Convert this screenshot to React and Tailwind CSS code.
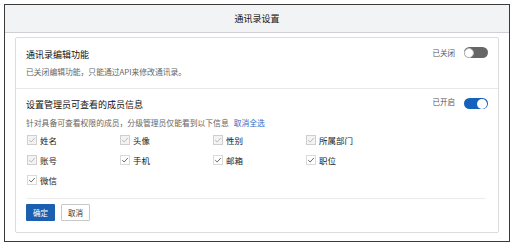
import React from 'react';

const font = { fontFamily: '"Noto Sans CJK SC", "Liberation Sans", sans-serif' };

const fields = [
  { label: '姓名', locked: true },
  { label: '头像', locked: true },
  { label: '性别', locked: true },
  { label: '所属部门', locked: true },
  { label: '账号', locked: true },
  { label: '手机', locked: false },
  { label: '邮箱', locked: false },
  { label: '职位', locked: false },
  { label: '微信', locked: false },
];

function Check({ locked }) {
  return (
    <span
      className={
        'flex h-[10px] w-[10px] items-center justify-center border ' +
        (locked ? 'border-[#cfcfcf] bg-[#f3f3f3]' : 'border-[#dadada] bg-white')
      }
    >
      <svg viewBox="0 0 10 10" className="h-[8px] w-[8px]">
        <path
          d="M1.5 5.2 L4 7.5 L8.6 2.4"
          fill="none"
          stroke={locked ? '#b3b3b3' : '#555'}
          strokeWidth="1.1"
        />
      </svg>
    </span>
  );
}

function Toggle({ on }) {
  return (
    <span
      className={
        'flex h-[11px] w-[24px] items-center rounded-full px-[1px] ' +
        (on ? 'justify-end bg-[#1562bd]' : 'justify-start bg-[#666]')
      }
    >
      <span
        className={
          'h-[10px] w-[10px] rounded-full bg-white ' +
          (on ? '' : 'border border-[#bbb] -ml-[1px]')
        }
      />
    </span>
  );
}

export default function App() {
  return (
    <div className="h-[245px] w-[515px] bg-white pl-[4px] pt-[4px]" style={font}>
      <div className="flex h-[238px] w-[506px] flex-col border border-[#3a3a3a]">
        {/* Header */}
        <div className="flex h-[28px] items-center justify-center border-b border-[#cdd1d5] bg-[#f1f3f5] text-[9px] text-[#111]">
          通讯录设置
        </div>

        <div className="px-[10px] pt-[4px]">
          <div className="h-[196px] w-[484px] rounded-[2px] border border-[#dcdcdc]">
            {/* Section 1 */}
            <div className="flex h-[51px] items-start justify-between border-b border-[#e8e8e8] px-[10px] pt-[10px]">
              <div>
                <div className="text-[9px] leading-[14px] text-[#111]">通讯录编辑功能</div>
                <div className="mt-[4px] text-[7.8px] leading-[12px] text-[#666]">
                  已关闭编辑功能，只能通过API来修改通讯录。
                </div>
              </div>
              <div className="-mt-[1px] flex items-center gap-[9px]">
                <span className="text-[7.5px] leading-[10px] text-[#555]">已关闭</span>
                <Toggle on={false} />
              </div>
            </div>

            {/* Section 2 */}
            <div className="px-[10px] pt-[9px]">
              <div className="flex items-start justify-between">
                <div>
                  <div className="text-[9px] leading-[14px] text-[#111]">设置管理员可查看的成员信息</div>
                  <div className="mt-[5px] text-[7.8px] leading-[12px] text-[#666]">
                    针对具备可查看权限的成员，分级管理员仅能看到以下信息
                    <span className="ml-[5px] text-[#2b6cc4]">取消全选</span>
                  </div>
                </div>
                <div className="flex items-center gap-[9px]">
                  <span className="-mt-[3px] text-[7.5px] leading-[10px] text-[#555]">已开启</span>
                  <Toggle on />
                </div>
              </div>

              <div className="mt-[1px] grid grid-cols-[93px_93px_93px_93px]">
                {fields.map((f) => (
                  <div key={f.label} className="flex h-[20px] items-center gap-[3px] pl-[1px]">
                    <Check locked={f.locked} />
                    <span className="text-[8.5px] text-[#222]">{f.label}</span>
                  </div>
                ))}
              </div>

              <div className="mr-[2px] mt-[8px] border-t border-[#ececec]" />

              <div className="mt-[5px] flex gap-[6px]">
                <button className="flex h-[17px] w-[29px] items-center justify-center rounded-[1px] bg-[#1b5fb0] text-[7.5px] text-white">
                  确定
                </button>
                <button className="flex h-[17px] w-[29px] items-center justify-center rounded-[1px] border border-[#c8c8c8] bg-white text-[7.5px] text-[#333]">
                  取消
                </button>
              </div>
            </div>
          </div>
        </div>
      </div>
    </div>
  );
}
